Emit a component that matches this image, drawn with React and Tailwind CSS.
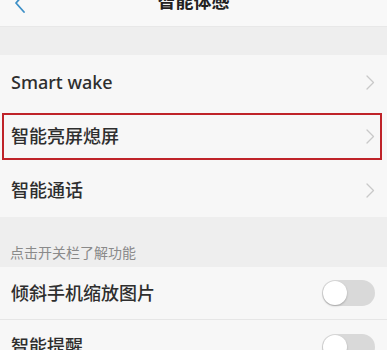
import React from "react";

const font = { fontFamily: '"Noto Sans", "Noto Sans CJK SC", sans-serif' };

function Chevron() {
  return (
    <svg width="9" height="15" viewBox="0 0 9 15" fill="none" className="shrink-0">
      <path d="M1 1l6.5 6.5L1 14" stroke="#c9c9c9" strokeWidth="1.3" strokeLinecap="round" strokeLinejoin="round" />
    </svg>
  );
}

function Toggle() {
  return (
    <div className="relative w-[53px] h-[26px] rounded-full bg-[#d9d9d9] shrink-0">
      <div className="absolute left-[1px] top-[1px] w-[24px] h-[24px] rounded-full bg-white shadow-[0_1px_2px_rgba(0,0,0,0.25)]" />
    </div>
  );
}

function LinkRow({ label, highlight }) {
  return (
    <div className="relative h-[54px] flex items-center justify-between pl-[11px] pr-[12px] bg-[#f7f7f7]">
      <span className="text-[18px] font-medium text-[#2e2e2e]">{label}</span>
      <Chevron />
      {highlight && (
        <div className="absolute left-[2px] right-[5px] top-[4px] bottom-[3px] border-[2.5px] border-[#bf2329]" />
      )}
    </div>
  );
}

function SwitchRow({ label, last }) {
  return (
    <div className={"h-[53px] flex items-center justify-between pl-[11px] pr-[12px] bg-[#f7f7f7] " + (last ? "" : "border-b border-[#e6e6e6]")}>
      <span className="text-[18px] font-medium text-[#2e2e2e]">{label}</span>
      <Toggle />
    </div>
  );
}

export default function App() {
  return (
    <div className="w-[387px] h-[350px] overflow-hidden bg-[#eeeeee]" style={font}>
      <div className="-mt-[23px]">
        {/* Header */}
        <div className="relative h-[50px] flex items-center justify-center bg-[#f8f8f8] border-b border-[#e8e8e8]">
          <svg width="12" height="20" viewBox="0 0 12 20" fill="none" className="absolute left-[14px] top-[16px]">
            <path d="M10 1L2 10l8 9" stroke="#3d8fc6" strokeWidth="1.8" strokeLinecap="round" strokeLinejoin="round" />
          </svg>
          <span className="text-[18px] font-bold text-[#222222]">智能体感</span>
        </div>

        <div className="h-[28px]" />

        <LinkRow label="Smart wake" />
        <LinkRow label="智能亮屏熄屏" highlight />
        <LinkRow label="智能通话" />

        <div className="h-[50px] flex items-end pl-[10px] pb-[4px]">
          <span className="text-[14px] text-[#8a8a8a]">点击开关栏了解功能</span>
        </div>

        <SwitchRow label="倾斜手机缩放图片" />
        <SwitchRow label="智能提醒" last />
      </div>
    </div>
  );
}
